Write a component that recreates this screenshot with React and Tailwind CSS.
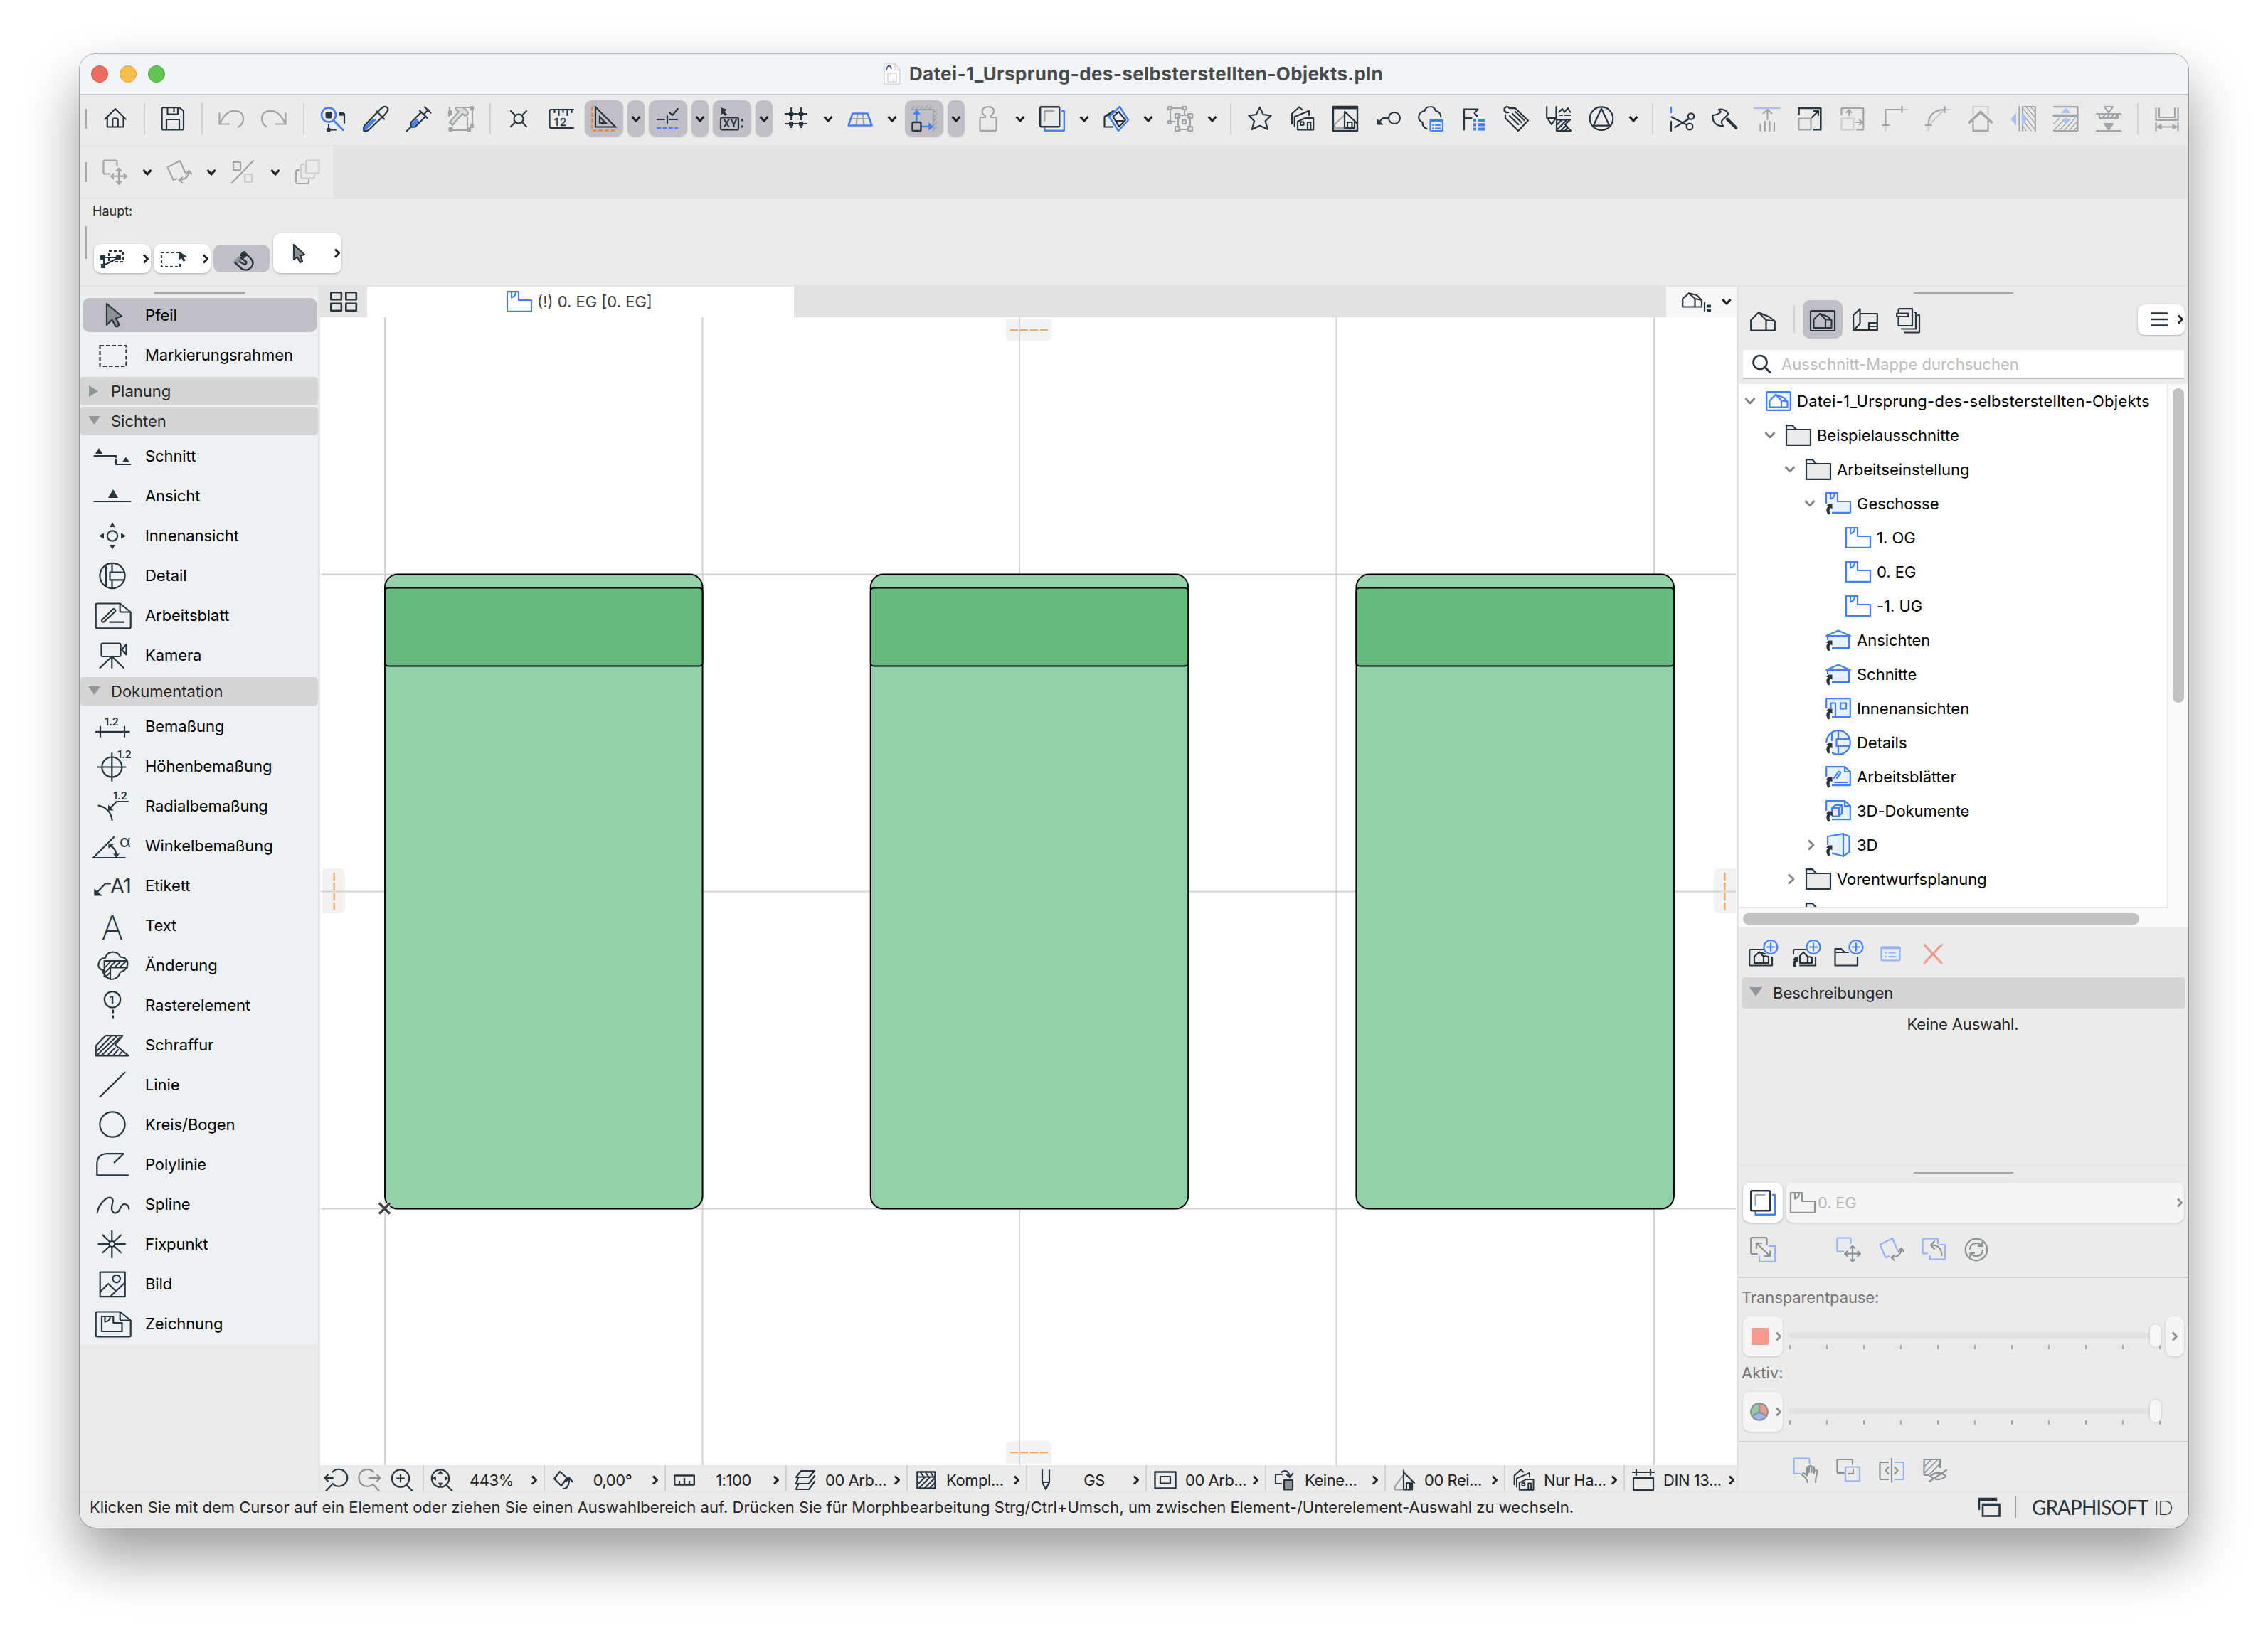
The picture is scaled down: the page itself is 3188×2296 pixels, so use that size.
import React from "react";

const D = "#28353d";
const B = "#437ff7";
const G = "#a1a5a8";
const L = "#cbcdce";
const LB = "#a9c0f5";
const MB = "#95b2f4";
const MG = "#8c9194";

function S({ w = 36, h = w, c = D, sw = 2.2, children, vb }) {
  return (
    <svg width={w} height={h} viewBox={vb || `0 0 ${w} ${h}`} fill="none" stroke={c} strokeWidth={sw} strokeLinecap="round" strokeLinejoin="round" className="block shrink-0 overflow-visible">
      {children}
    </svg>
  );
}
const P = (p) => <path {...p} />;

const ChevDown = ({ c = "#1f2021" }) => (
  <S w={14} h={10} c={c} sw={3.2}><P d="M1.5 2L7 8L12.5 2" strokeLinecap="butt" /></S>
);
const ChevRight = ({ c = "#1f2021" }) => (
  <S w={10} h={14} c={c} sw={3}><P d="M2 1.5L7.5 7L2 12.5" strokeLinecap="butt" /></S>
);

/* ---------- shared glyphs ---------- */
function House3D({ c = D, w = 36, h = 28, sw }) {
  return (
    <S w={w} h={h} vb="0 0 36 28" c={c} sw={sw}>
      <P d="M1.2 26.5V12L12 1.2L22.5 12V26.5H1.2ZM22.5 12L34.8 13.5V26.5H22.5M12 1.2L27 7.5L34.8 13.5" />
    </S>
  );
}
const ViewMap = ({ c = D }) => (
  <S w={36} c={c}>
    <rect x="1" y="4" width="34" height="28" rx="1" />
    <P d="M5.5 28V16L14 8L22 16V28H5.5ZM22 16L30.5 17V28H22M14 8L25 12L30.5 17" sw="2" />
  </S>
);
const Floor = ({ c = B, w = 36, h = 30, fill = "none" }) => (
  <S w={w} h={h} vb="0 0 36 30" c={c}>
    <P d="M1 1.2H17V13H35V28.8H1Z" fill={fill} />
    <P d="M7 1.5V9.5Q13 8 13 1.5" />
  </S>
);
const Folder = ({ c = D, fill = "#ebebeb" }) => (
  <S w={36} h={30} c={c}>
    <P d="M1 28.8V1.2H9.5L15 7H35V28.8Z" fill={fill} />
    <P d="M1 7H16" />
  </S>
);
const Trace = () => (
  <S w={36}>
    <P d="M7.5 31V34.8H34.8V7H32" stroke={B} strokeWidth="2.4" />
    <rect x="1.2" y="1.2" width="27" height="28" rx="1.5" strokeWidth="2.4" />
    <P d="M7.5 21V7H20.5" stroke={G} />
  </S>
);
const Houses = ({ w = 36 }) => (
  <S w={w} vb="0 0 36 36">
    <P d="M2.9 25V11L13.3 1.5L17 5M6.7 28.7V15.3L27 6.7V13M11 33.5V22L21.7 17H33.2V33.5ZM25 33V23H29.3V33" />
    <rect x="15" y="22.5" width="4.5" height="4.5" rx="1" />
  </S>
);
const MoveBox = ({ c1 = G, c2 = G, w = 36 }) => (
  <S w={w} vb="0 0 36 36" c={c2}>
    <P d="M10 20.5H3Q1.5 20.5 1.5 19V3Q1.5 1.5 3 1.5H19Q20.5 1.5 20.5 3V9" stroke={c1} />
    <P d="M23 13V34.5M12.5 23.7H34M19.8 16L23 12.7L26.2 16M19.8 31.5L23 34.8L26.2 31.5M15.5 20.5L12.2 23.7L15.5 27M30.5 20.5L33.8 23.7L30.5 27" />
  </S>
);
const RotateBox = ({ c1 = G, c2 = G, w = 36 }) => (
  <S w={w} vb="0 0 36 36" c={c2}>
    <P d="M14 27.5L9.5 29L1.5 11L19 2L26 18" stroke={c1} />
    <P d="M18 29Q31 28 31.5 17M27.5 20.5L31.5 16L35 20.5M22 25.5L17.5 29L22 33" />
  </S>
);

/* ---------- main toolbar ---------- */
const Perspective = () => (
  <S w={36} c={G}>
    <P d="M5 18H31M14.5 11L12.5 27M21.5 11L23.5 27" />
    <P d="M7.5 10.5H28.5L34.5 27.5H1.5Z" stroke={B} strokeWidth="2.6" />
  </S>
);
const HatchLines = ({ c = G }) => <P stroke={c} strokeWidth="1.6" d="M1 4L4 .5M7 4L10 .5M13 4L16 .5M19 4L22 .5M25 4L28 .5" />;

const T = {
  home: <S><P d="M3.5 18.5L18 4L32.5 18.5M6.8 16V29.5H29.5V16M14.3 29V20Q14.3 17.5 16 17.5H20Q21.8 17.5 21.8 20V29" /></S>,
  save: <S><P d="M4.5 2.2H27L33 7V31.5Q33 33.5 31 33.5H4.5Q2.6 33.5 2.6 31.5V4Q2.6 2.2 4.5 2.2ZM10.5 2.5V11.5H25V2.5M19.5 3V8M9 33V19H27V33" /></S>,
  undo: <S c={G}><P d="M1.5 10V25.5H15M2 25Q10 7 22 6.8Q34.8 7 35 18Q34.8 26 28 29.5" /></S>,
  redo: <S c={G}><P d="M34.5 10V25.5H21M34 25Q26 7 14 6.8Q1.2 7 1 18Q1.2 26 8 29.5" /></S>,
  find: <S><circle cx="12" cy="12.5" r="10" stroke={B} strokeWidth="2.6" /><P d="M19 20.5L32.5 34" stroke={B} strokeWidth="2.8" /><rect x="7.5" y="8" width="9.5" height="9.5" rx="2.5" fill={D} stroke="none" /><P d="M28 11H34V24M12 26V33.5H22" /><rect x="27" y="8.7" width="6" height="5" fill={D} stroke="none" /><rect x="9.5" y="31" width="5" height="5" fill={D} stroke="none" /></S>,
  dropper: <S><P d="M4 33.5L19 18.5L14 17L2.5 28.5Q0 33 3 34.5Z" fill={B} stroke="none" transform="translate(0 1)" /><P d="M24 5L2.5 27.5Q0 31.5 1.5 35Q5 36 8.5 33.5L31 12M19.5 7.5L30 18.5M24 5L28 1.8Q32 -.5 34.5 2.5Q36.5 5 34 8L31 12" /></S>,
  syringe: <S><P d="M9 24L15.5 17.5L19.5 22L13 28.5L7.5 29.5Z" fill={B} stroke="none" /><P d="M22 9L7.5 23.5V30L13.5 29.5L28.5 14.5M7 30L1.5 35.5M20 6.5L30.5 17M25.5 12L32 5M27 1.5L35.5 9.5" /></S>,
  transfer: <S c={G}><P d="M2 9V2M1 8V14M4 34H30M27 16V30M34 2V28M22 2H34" /><rect x="1.5" y="7" width="3" height="5" fill={G} /><rect x="1.5" y="31" width="4" height="4" fill={G} /><rect x="27" y="31" width="4" height="4" fill={G} /><rect x="32" y="1" width="3" height="4" fill={G} /><rect x="32" y="26" width="3" height="4" fill={G} /><P d="M11 2H20Q26 4 28 11L24 14L20 11L6 27L2 23L15 8L11 5Z" fill="#dcdddd" /></S>,
  snap: <S><circle cx="18" cy="18" r="6.5" /><P d="M7 7L13.5 13.5M29 7L22.5 13.5M7 29L13.5 22.5M29 29L22.5 22.5" /></S>,
  ruler: <S><P d="M35 5H4Q1.5 5 1.5 7V29Q1.5 31 4 31H35M8.5 5V9M14.5 5V13M20.5 5V9M26.5 5V13M32.5 5V9" /><text x="8" y="27.5" fontSize="15" fontFamily="Inter" letterSpacing="2" fill={D} stroke={D} strokeWidth=".4">12</text></S>,
  triangle: <S><P d="M1.5 1V34.5H36" stroke="#ec8434" strokeWidth="2.6" strokeDasharray="5.5 3" strokeLinecap="butt" /><P d="M6 1.5V29.5H34ZM12 15.5V24H20.5Z" strokeLinejoin="miter" /></S>,
  guide: <S><P d="M3 19H13M17 14V24M20 19H31M20 9L24 13L32 4" /><P d="M2 31H32" stroke={B} strokeWidth="2.6" strokeDasharray="6 2.5" strokeLinecap="butt" /></S>,
  xy: <S><P d="M2 2V13L5 10.5L8.5 14L11 12L7.5 8L11 5Z" fill={D} stroke="none" /><rect x="2" y="16.5" width="25" height="17" rx="2" /><text x="5" y="30" fontSize="14" fontWeight="700" fontFamily="Inter" fill={D} stroke="none">XY</text><P d="M31 20H34M31 29H34" strokeWidth="3" strokeLinecap="butt" /></S>,
  grid: <S><P d="M11 2V34M25 2V34" strokeDasharray="7 4" strokeLinecap="butt" /><P d="M2 11H34M2 25H34" strokeLinecap="butt" /><rect x="8" y="8" width="6" height="6" rx="1" fill={D} stroke="none" /><rect x="22" y="8" width="6" height="6" rx="1" fill={D} stroke="none" /><rect x="8" y="22" width="6" height="6" rx="1" fill={D} stroke="none" /><rect x="22" y="22" width="6" height="6" rx="1" fill={D} stroke="none" /></S>,
  perspective: <Perspective />,
  snapbox: <S><HatchLines /><P d="M0 5H31V36" stroke={G} /><P stroke={G} strokeWidth="1.6" d="M32 9L35.5 5M32 15L35.5 11M32 21L35.5 17M32 27L35.5 23M32 33L35.5 29" /><P d="M7.5 22V8M14 29H28" stroke={B} strokeWidth="2.4" /><P d="M3 11L7.5 5.5L12 11ZM25 24.5L31 29L25 33.5Z" fill={B} stroke={B} strokeWidth="1" /><rect x="1.5" y="23" width="12" height="12" rx="1.5" strokeWidth="2.4" /></S>,
  weight: <S c={G}><P d="M14 14Q9 11 9.5 7Q10.5 1.2 18 1.2Q25.5 1.2 26 7Q26 11 21.5 14V16H28Q29.5 16 29.5 18V33Q29.5 34.8 28 34.8H8Q6.5 34.8 6.5 33V18Q6.5 16 8 16H14Z" /></S>,
  trace: <Trace />,
  cube: <S><P d="M14 7L1.5 15V29.5H13M14 7L18 9M1.5 15L9 12" /><P d="M23 1L8 15L21 35L35 20Z" stroke={B} strokeWidth="2.4" /><P d="M21.5 8L13.5 15L22 29L31 20ZM17 21H28" /></S>,
  group: <S c={G}><P d="M4 5V20M5 3H22M24 5V12M4 22H10M15 15V30M16 13H30M32 15V30M16 33H30" /><rect x="1" y="1" width="5" height="4" /><rect x="21" y="1" width="5" height="4" /><rect x="1" y="21" width="4" height="4" /><rect x="11" y="11" width="6" height="6" /><rect x="29" y="11" width="6" height="6" /><rect x="11" y="29" width="6" height="6" /><rect x="29" y="29" width="6" height="6" /><rect x="21" y="20" width="5" height="5" /></S>,
  star: <S><P d="M17.8 2L22.7 12L33.5 13.6L25.6 21.2L29 33L17.8 27.7L6.8 33L10.1 21.2L2.5 13.6L12.8 12Z" /></S>,
  houses: <Houses />,
  frame: <S><P d="M17 12.7L3 26Q2 29 4.5 31H16" stroke={G} /><rect x="1" y="1" width="34" height="34" strokeWidth="2.4" /><P d="M1 2.5H35" strokeWidth="4" strokeLinecap="butt" /><P d="M17 8V31H31V21M18 8.5L34 24M21 31V23H27.5V31" /></S>,
  leader: <S><circle cx="27" cy="17" r="8" /><P d="M19 17H11L5 23" /><P d="M2.5 18.5V26H10.5Z" fill={D} strokeWidth="1" /></S>,
  cloud: <S><P d="M32.3 15.5Q32 8 25 7Q23.5 .8 17.5 1Q11 1 9.5 7Q1.5 8 1.2 16Q1.5 21 6.5 23Q6.5 30 12.5 32" /><rect x="17.5" y="19" width="17.5" height="16" rx="1" stroke={B} fill="#e6effc" strokeWidth="2.2" /><P d="M18 21H35" stroke={B} strokeWidth="4" strokeLinecap="butt" /><P d="M21 27H22M25 27H31M21 31.5H22M25 31.5H31" stroke={B} /></S>,
  flag: <S><P d="M5 33.5V4.5H24.5L19.5 10L23.5 14.5M5 17H15.5" /><P stroke={B} strokeWidth="4.2" strokeLinecap="butt" d="M18 20H22M24 20H34.5M18 26.3H22M24 26.3H34.5M18 32.5H22M24 32.5H34.5" /></S>,
  tag: <S><P d="M3 12.5V17L21 35L35 20.5L17 3.2H9M7.5 9Q3 10 1.5 6Q1 2 5 1.2Q7.5 1 8.5 3M9 14L21.5 26M13 11L26 23.5M17 8L30 20.5" /></S>,
  pens: <S><P d="M1.2 1V17H14.5V1M2 17L8 26L14 17M18.5 8.5L23 4L26 8.5L31 3L34 8.5M20 13H23M27 13H34M15 35V19.5H34L27 26L35 35ZM15 27L22 20M15 34L29 20M21 35L27 29M27 35L30 31" /></S>,
  north: <S><circle cx="18" cy="17.7" r="16.3" /><P d="M18 3.5L6.8 27.7H29.2Z" /></S>,
  scissors: <S><P d="M3 1V10" stroke={B} strokeLinecap="butt" /><P d="M3 22V35M3.5 15.5L25 26.5M8.5 30L27.5 18.5" /><circle cx="31" cy="14.5" r="4.2" /><circle cx="29" cy="29" r="4.4" /></S>,
  axe: <S><P d="M22 18.5L34.5 31" strokeWidth="4" /><P d="M10 5L13 8.5Q8 12.5 1.5 13Q1 21 5 24.5Q9 28.5 16 28.2Q13 24 14.5 20.5L23.5 11.5Q21.5 6.5 17 5.5Q13.5 4 10 5Z" /></S>,
  lift: <S c={G}><P d="M.5 3H35.5" stroke={LB} strokeWidth="2.6" /><P d="M18.5 19V6M12.5 10.5L18.5 5L24.5 10.5M8.5 26V35M15 22V35M21.5 22V35M28 24V35" /></S>,
  resize: <S><P d="M2.5 13V3H33.3V33.3H23" strokeWidth="2.6" strokeLinecap="butt" /><rect x="2.5" y="17.5" width="17" height="15.8" stroke={G} /><P d="M21 16L29.5 7.5M23.5 7H30V13" /></S>,
  stretch: <S c={G}><P d="M2.5 13V3H33.3V33.3H23" strokeLinecap="butt" /><rect x="2.5" y="17.5" width="17" height="15.8" stroke={L} /><P d="M13 13V6M9.5 9L13 5.5L16.5 9M23 23H31M28 19.5L31.5 23L28 26.5" /></S>,
  corner: <S c={G}><P d="M4.5 35V28M28 5H35" stroke={L} /><P d="M4.5 27V5H27M27.5 1V9M.5 27H9" /></S>,
  fillet: <S c={G}><P d="M4.5 35V28L27 5H35" stroke={L} /><P d="M4.5 27Q5 6 27 5M27.5 1V9M.5 27H9" /></S>,
  roof: <S c={G}><P d="M7.5 12V1H28.5V12" stroke={L} /><P d="M7.5 21V34.8H28.5V21" /><P d="M2.5 23L18 8.5L33.5 23" strokeWidth="3.6" /></S>,
  wall: <S c={G}><P d="M17 1H34.8V35M12.5 1V35M17 1V35" /><P d="M18 4L34 24M18 12L34 33M18 21L29 35M22 1L34 16M28 1L34 8M18 29L22 35" strokeWidth="1.3" /><P d="M8 9V28L.5 18.5ZM16 9V28L23.5 18.5Z" fill={LB} stroke="none" /></S>,
  slab: <S c={G}><P d="M1 1.2H34.5V35H1M1 13.5H34" /><P d="M1 13.5H34" strokeWidth="3.6" /><P d="M1 34L18 17M8 35L24 18M15 35L31 17M22 35L34 22M29 35L34 29M1 25L9 17" strokeWidth="1.3" /><P d="M11 10H25L18 2.5ZM11 18H25L18 26Z" fill={LB} stroke="none" /></S>,
  elevate: <S c={G}><P d="M12 1H24L18 9.5ZM1 11H35M5 11.5V17H31V11.5M9 17L13 12M15 17L19 12M21 17L25 12M27 17L30 12M1 35H35" /><P d="M12 25H24L18 34Z" fill={G} /></S>,
  dimension: <S c={G}><P d="M2.5 3V20H33.5V3M7 3V16H29V3M2.5 24V35M33.5 24V35M5 29.5H31" /><P d="M10 26V33L4 29.5ZM26 26V33L32 29.5Z" fill={G} strokeWidth="1" /></S>,
};

const Cell = ({ children }) => <div className="flex h-[52px] w-[60px] shrink-0 items-center justify-center">{children}</div>;
const ActiveCell = ({ children }) => (
  <div className="flex w-[60px] shrink-0 justify-center">
    <div className="flex h-[51px] w-[54px] items-center justify-center rounded-[10px] bg-[#c0bfc5] shadow-[0_1px_2px_rgba(0,0,0,0.12)]">{children}</div>
  </div>
);
const Chev = () => <div className="flex h-[52px] w-[30px] shrink-0 items-center justify-center"><ChevDown /></div>;
const ActiveChev = () => (
  <div className="flex w-[30px] shrink-0 justify-center">
    <div className="flex h-[51px] w-6 items-center justify-center rounded-[9px] bg-[#c0bfc5] shadow-[0_1px_2px_rgba(0,0,0,0.12)]"><ChevDown /></div>
  </div>
);
const SEP = { "|": "w-[21px]", "||": "w-[22px]", "|||": "w-[23px]" };
const Sep = ({ kind }) => (
  <div className={"flex h-11 shrink-0 justify-center " + SEP[kind]}>
    <div className="h-11 w-[2px] bg-[#d1d1d1]" />
  </div>
);
const Grip = ({ cls }) => <div className={"w-[2px] shrink-0 bg-[#a9a9a9] " + cls} />;

const TOOLBAR = [
  "home", "|", "save", "||", "undo", "redo", "|||", "find", "dropper", "syringe", "transfer", "|", "snap", "ruler",
  "*triangle", "*v", "*guide", "*v", "*xy", "*v", "grid", "v", "perspective", "v", "*snapbox", "*v", "weight", "v",
  "trace", "v", "cube", "v", "group", "v", "||", "star", "houses", "frame", "leader", "cloud", "flag", "tag", "pens",
  "north", "v", "|||", "scissors", "axe", "lift", "resize", "stretch", "corner", "fillet", "roof", "wall", "slab",
  "elevate", "||", "dimension",
];

function MainToolbar() {
  return (
    <div className="flex h-[70px] items-center overflow-hidden bg-[#ebebeb] pb-[5px] pl-2">
      <Grip cls="mr-[10px] h-7" />
      {TOOLBAR.map((k, i) => {
        if (k[0] === "|") return <Sep key={i} kind={k} />;
        if (k === "v") return <Chev key={i} />;
        if (k === "*v") return <ActiveChev key={i} />;
        if (k[0] === "*") return <ActiveCell key={i}>{T[k.slice(1)]}</ActiveCell>;
        return <Cell key={i}>{T[k]}</Cell>;
      })}
    </div>
  );
}

function EditToolbar() {
  return (
    <div className="flex h-[76px] bg-[#e4e4e4] py-[2px]">
      <div className="flex w-[356px] items-center bg-[#ebebeb] pl-2">
        <Grip cls="mr-[10px] h-7" />
        <Cell><MoveBox /></Cell>
        <Chev />
        <Cell><RotateBox /></Cell>
        <Chev />
        <Cell>
          <S c={G}><rect x="4" y="4" width="10" height="11" /><P d="M2 33L32 2" /><rect x="20" y="21" width="10" height="11" stroke={L} /></S>
        </Cell>
        <Chev />
        <Cell>
          <S c={L}><rect x="16" y="1.5" width="18.5" height="18" rx="2" /><P d="M13 7H10.5Q9 7 9 9V25Q9 26.5 11 26.5H26Q28 26.5 28 24V22" /><P d="M6 15H4Q2 15 2 17V32Q2 34 4 34H18Q20 34 20 32V29" stroke={G} /></S>
        </Cell>
      </div>
    </div>
  );
}

const WhiteBtn = "rounded-[10px] bg-white shadow-[0_1px_3px_rgba(0,0,0,0.28)]";

function InfoBox() {
  return (
    <div className="flex h-[121px] flex-col bg-[#ebebeb] pl-2">
      <div className="mt-[5px] h-[23px] pl-[10px] text-[18px] leading-[23px] text-[#262626]">Haupt:</div>
      <div className="flex h-[76px]">
        <Grip cls="mr-[10px] mt-[10px] h-[46px]" />
        <div className="flex items-end gap-1">
          <div className={"flex h-[41px] w-20 items-center justify-between pl-[9px] pr-[2px] " + WhiteBtn}>
            <S w={34} h={26}><rect x="12" y="2" width="20" height="15" strokeDasharray="4 3" strokeLinecap="butt" /><P d="M4 11H26L5 22V11" /><rect x="0" y="8" width="7" height="6" fill={D} stroke="none" /><rect x="22" y="8" width="7" height="6" fill={D} stroke="none" /><rect x="1" y="20" width="6" height="6" fill={D} stroke="none" /></S>
            <ChevRight />
          </div>
          <div className={"flex h-[41px] w-20 items-center justify-between pl-[9px] pr-[2px] " + WhiteBtn}>
            <S w={38} h={26}><P d="M26 4H2V24H28V18" strokeDasharray="4 3" strokeLinecap="butt" /><P d="M26 2V15L30 12L33 17L36 15L33 11L38 10Z" fill={D} stroke="none" /></S>
            <ChevRight />
          </div>
          <div className="mb-[1px] flex h-[39px] w-[79px] items-end justify-center rounded-[10px] bg-[#c0bfc5] pl-1">
            <S w={32} h={32}><P d="M2 17L10 9L15 14L9 20Z" fill={MG} stroke="none" /><P d="M11 8Q14 2 18 3L22 8L16 13Z" fill={D} stroke="none" /><P d="M17 3L27 13Q32 19 27 25Q21 31 14 27L4 18M12 11L20 17Q21 20 18 21L11 17" strokeWidth="2.4" /></S>
          </div>
          <div className={"ml-[1px] flex h-14 w-24 items-center justify-between pl-[26px] pr-[1px] " + WhiteBtn}>
            <S w={20} h={28}><P d="M3 2V23L7.5 19.5L12 27L15 25L12 17.5L18 16Z" fill={MG} /></S>
            <ChevRight />
          </div>
        </div>
      </div>
    </div>
  );
}

/* ---------- toolbox ---------- */
const t12 = (x, y) => <text x={x - 1} y={y} fontSize="14.5" fontWeight="600" fontFamily="Inter" fill={D} stroke="none">1.2</text>;
const DOC = "M6.5 3.5H38.7L53.7 15.5V36.5Q53.7 38.3 52 38.3H6.5Q4.7 38.3 4.7 36.5V5.5Q4.7 3.5 6.5 3.5ZM38.7 3.5V14Q38.7 15.5 41 15.5H53.5";
const K = {
  pfeil: <><P d="M20 4L41 21.5L32.5 24.5L37.5 33Q36 37 32.5 36L27.5 26.5L20 34Z" fill={MG} /></>,
  mark: <rect x="10.5" y="7" width="37" height="29" strokeDasharray="5.5 3" strokeLinecap="butt" />,
  schnitt: <><P d="M2.5 20H33V22M33 25V32H53.5" /><P d="M4 17L9 9L14 17ZM42 28.5L47 21.5L52 28.5Z" fill={D} stroke="none" /></>,
  ansicht: <><P d="M2.5 28H53.5" /><P d="M22 23L29 11L36 23Z" fill={D} stroke="none" /></>,
  innen: <><circle cx="28" cy="20.5" r="7.2" /><P d="M24 8L28 1.5L32 8ZM24 33L28 39.5L32 33ZM16 16.5V24.5L9 20.5ZM40 16.5V24.5L47 20.5Z" fill={D} stroke="none" /></>,
  detail: <><circle cx="28" cy="20.5" r="17.6" /><P d="M19 5.5V35.5M27.5 3V15.5M27.5 26.3V38M45 15.5H24.5V26.3H45" /></>,
  blatt: <><P d={DOC} /><P d="M13 27L28 12Q31 10 32 13Q33 14 31 15.5L16 29.5Q13 30 13 27ZM24.5 29.7H44" /></>,
  kamera: <><rect x="12.5" y="3.5" width="27" height="18.5" rx="2" /><P d="M47.5 5V19.5L41 12.3ZM27.3 22V38M27.3 22L10.5 38M27.3 22L43.7 38" /></>,
  bem: <><P d="M4.7 27.8H51.7M11 20.5V35M45 20.5V35" />{t12(18, 18.5)}</>,
  hoehe: <><circle cx="27.3" cy="21.5" r="14" /><P d="M7.5 21.5H46.5M27.3 2V41" />{t12(36, 9)}</>,
  radial: <><P d="M8.5 19.5Q26 24 27.5 40M24 24L34 14H50" /><P d="M22 26.5V18.5L29.5 26.5Z" fill={D} stroke="none" />{t12(30, 11)}</>,
  winkel: <><P d="M30 8L1 37H45.7M24 20Q33 23 33.5 33" /><P d="M22.5 24V17H31ZM29 31.5H38L33.5 37Z" fill={D} stroke="none" /><text x="38" y="21.5" fontSize="24" fontFamily="Inter" fill={D} stroke="none">α</text></>,
  etikett: <><P d="M5 31L18 17.5H25" /><P d="M2.3 24.5V34.5H14Z" fill={D} stroke="none" /><text x="25" y="31" fontSize="29" fontWeight="400" letterSpacing="-1" fontFamily="Inter" fill={D} stroke="none">A1</text></>,
  text: <text x="28" y="39.5" textAnchor="middle" fontSize="47" fontWeight="200" fontFamily="Inter" fill={D} stroke="none">A</text>,
  aend: <><P d="M17 33Q13 29 15 27Q7 25 8.5 18Q10 10 18 10Q20 2 28.5 1.5Q37 2 39 8.5Q49 9 49.5 18Q49 27 39 30Q36 39.5 27 40Q20 39 17 33ZM16.7 14H49M16.7 14V36M25 38V23.5H49" /><P d="M17 24L26 14.5M24 23L33 14.5M31 23L40 14.5M38 23L47 15M17 31L24 24M18 37L25 30" strokeWidth="1.8" /></>,
  raster: <><circle cx="28" cy="12.3" r="11.2" /><P d="M29 26.5V40" strokeDasharray="5 3" strokeLinecap="butt" /><text x="24" y="17.5" fontSize="14" fontWeight="700" fontFamily="Inter" fill={D} stroke="none">1</text></>,
  schraff: <><P d="M4.7 35.3V21.5L18.3 7.2H42.3L31.7 20L50.7 35.3Z" /><P d="M6 29L26 8M6 35L34 8M13 35L38 10M21 35L32 24M29 35L36 27M37 35L41 30" strokeWidth="1.9" /></>,
  linie: <P d="M10.5 37.3L45.5 2.8" />,
  kreis: <circle cx="28" cy="20" r="17.6" />,
  poly: <P d="M30.7 17.4L43.7 5.2H20Q7 6 6.3 18.5V35.3H50" />,
  spline: <P d="M6.7 32.2Q8 24 14 17Q21 9 26 11Q30 13 28 19Q25 31 31 32.3Q36 33 39 26Q42 19 46 20Q51 21 51.3 27" />,
  fix: <><circle cx="27.3" cy="20" r="4" /><P d="M8.5 20H23M31.5 20H46M27.3 1.6V16M27.3 24V39M14.5 7.5L24.3 17M30.3 23L40 32M40 7.5L30.3 17M24.3 23L14.5 32" /></>,
  bild: <><rect x="10.7" y="3.7" width="35" height="34.5" /><circle cx="33.7" cy="13" r="5.2" /><P d="M11 31L22.3 20L32.3 29.7M25 38L45.5 18.5" /></>,
  zeich: <><P d={DOC} /><P d="M13 10H29.3V19H41.5V31H13ZM17.5 10V17.5Q24.5 17 25 10" /></>,
};

const Tool = ({ icon, label, active }) => (
  <div className={active ? "mb-1 ml-1 mr-[1px] mt-[3px] flex h-12 items-center rounded-[10px] bg-[#c0bfc5] pl-[14px]" : "flex h-14 items-center pl-[18px]"}>
    <S w={56} h={40}>{K[icon]}</S>
    <span className="ml-[18px] text-[22px] leading-7 tracking-[-0.08px] text-black">{label}</span>
  </div>
);
const Group = ({ label, closed, cls = "" }) => (
  <div className={"flex h-10 items-center rounded-[5px] bg-[#d5d5d5] pl-3 " + cls}>
    <S w={18} h={18}>{closed ? <P d="M1 1V17L14 9Z" fill="#919699" stroke="none" /> : <P d="M0 2H17L8.5 14Z" fill="#919699" stroke="none" />}</S>
    <span className="ml-[14px] text-[22px] leading-7 text-[#262626]">{label}</span>
  </div>
);

function Toolbox() {
  const views = [["schnitt", "Schnitt"], ["ansicht", "Ansicht"], ["innen", "Innenansicht"], ["detail", "Detail"], ["blatt", "Arbeitsblatt"], ["kamera", "Kamera"]];
  const docs = [["bem", "Bemaßung"], ["hoehe", "Höhenbemaßung"], ["radial", "Radialbemaßung"], ["winkel", "Winkelbemaßung"], ["etikett", "Etikett"], ["text", "Text"], ["aend", "Änderung"], ["raster", "Rasterelement"], ["schraff", "Schraffur"], ["linie", "Linie"], ["kreis", "Kreis/Bogen"], ["poly", "Polylinie"], ["spline", "Spline"], ["fix", "Fixpunkt"], ["bild", "Bild"], ["zeich", "Zeichnung"]];
  return (
    <aside className="flex w-[338px] shrink-0 flex-col border-r-[3px] border-[#e4e4e4] bg-[#ebebeb]">
      <div className="flex h-[13px] justify-center pt-2"><div className="h-[2px] w-32 bg-[#a8a8a8]" /></div>
      <div className="bg-[#eef1f3] pb-[2px]">
        <Tool icon="pfeil" label="Pfeil" active />
        <Tool icon="mark" label="Markierungsrahmen" />
        <Group label="Planung" closed cls="mt-[3px]" />
        <Group label="Sichten" cls="mt-[2px]" />
        <div className="pt-[1px]">{views.map(([i, l]) => <Tool key={i} icon={i} label={l} />)}</div>
        <Group label="Dokumentation" cls="mt-[3px]" />
        <div className="pt-[1px]">{docs.map(([i, l]) => <Tool key={i} icon={i} label={l} />)}</div>
      </div>
    </aside>
  );
}

/* ---------- plan canvas ---------- */
function TabBar() {
  return (
    <div className="flex h-[43px] bg-[#e2e2e2]">
      <div className="flex w-[66px] items-center justify-center bg-[#e4e4e4]">
        <S w={38} h={28} sw={2.6}><rect x="1.3" y="1.3" width="14.5" height="10" /><rect x="22.3" y="1.3" width="14.5" height="10" /><rect x="1.3" y="16.8" width="14.5" height="10" /><rect x="22.3" y="16.8" width="14.5" height="10" /></S>
      </div>
      <div className="flex w-[600px] items-center justify-center gap-[7px] bg-white pr-[3px]">
        <Floor />
        <span className="text-[22px] leading-7 text-[#3c3c3c]">(!) 0. EG [0. EG]</span>
      </div>
      <div className="ml-auto flex w-[99px] items-center bg-[#f7f7f7] pl-[22px]">
        <S w={42} h={28}><P d="M1.2 21.5V10L10 2.2L18.5 10V21.5ZM18.5 10L28 12V21.5H18.5M10 2.2L21 5L28 12M32 15V27" /><P d="M35 20.5H41M35 27H41" strokeWidth="4" strokeLinecap="butt" /></S>
        <span className="ml-[14px]"><ChevDown /></span>
      </div>
    </div>
  );
}

function Canvas() {
  const bed = (x) => (
    <g key={x}>
      <rect x={x} y="362" width="447" height="893" rx="18" fill="#94d1ab" stroke="#000" strokeWidth="2" />
      <rect x={x} y="381" width="447" height="110" rx="5" fill="#67ba80" stroke="#000" strokeWidth="2" />
    </g>
  );
  return (
    <svg width="1991" height="1616" viewBox="0 0 1991 1616" className="block bg-white">
      <g fill="#f2f2f2">
        <path d="M964 2H1028V26Q1028 34 1020 34H972Q964 34 964 26Z" />
        <path d="M964 1614V1590Q964 1582 972 1582H1020Q1028 1582 1028 1590V1614Z" />
        <path d="M2 776H26Q34 776 34 784V831Q34 839 26 839H2Z" />
        <path d="M1991 776H1968Q1960 776 1960 784V831Q1960 839 1968 839H1991Z" />
      </g>
      <g stroke="#d3d3d3" strokeWidth="2">
        {[90, 537, 983, 1429, 1876].map((x) => <line key={x} x1={x} x2={x} y1="0" y2="1616" />)}
        {[362, 808.5, 1255].map((y) => <line key={y} y1={y} y2={y} x1="0" x2="1991" />)}
      </g>
      <g stroke="#f3a75f" strokeWidth="2.4" strokeDasharray="11 3">
        <path d="M970 18H1023M970 1598H1023M18.5 782V835M1975.5 782V835" />
      </g>
      {[90, 773.5, 1457].map(bed)}
      <g strokeLinecap="butt">
        <path d="M82 1247L97 1262M97 1247L82 1262" stroke="#fff" strokeWidth="7" opacity=".7" />
        <path d="M82 1247L97 1262M97 1247L82 1262" stroke="#444" strokeWidth="3.6" />
      </g>
    </svg>
  );
}

const Lens = ({ c = D, children, flip }) => (
  <S w={34} h={32} c={c}>
    <circle cx={flip ? 20 : 14} cy="13.5" r="12.2" />
    <P d={flip ? "M11.5 23L3 31.5" : "M22.5 23L31 31.5"} />
    {children}
  </S>
);
const QIcons = {
  rot: <S w={30} h={30}><P d="M10 3L20 12L12 23L2 13ZM15 27Q23 27 23 13M18.5 17L23 11.5L27.5 17" /></S>,
  scale: <S w={30} h={16} sw={2.4}><P d="M1.2 1.5H28.8V14.5H1.2ZM8 14V10M15 14V6M22 14V10" /></S>,
  layers: <S w={30} h={30}><P d="M9 2H28L20 11H2ZM5 12L2 20H20L28 9M5 21L2 28H20L28 17" /></S>,
  hatch: <S w={28} h={26}><rect x="1.5" y="1.5" width="25" height="23" strokeWidth="2.6" /><P d="M2 8.5H26M6 2L10 8M13 2L17 8M20 2L24 8M3 18L12 9M4 24L19 9M12 24L26 10M19 24L26 17" strokeWidth="2" /></S>,
  pen: <S w={20} h={30}><P d="M5 1V18H15V1M5 18L10 28L15 18" /></S>,
  box: <S w={32} h={26}><rect x="1.5" y="1.5" width="29" height="23" strokeWidth="2.4" /><rect x="9" y="8" width="14" height="9.5" /></S>,
  swap: <S w={30} h={30}><P d="M10 20H2V7H11M10 4Q19 -2 22 10M17 7L22 11L26 6" /><rect x="14" y="15" width="12" height="13.5" fill={MG} /></S>,
  reno: <S w={32} h={30}><P d="M15 8L4 22Q2 26 3 28.5H14" stroke={G} /><P d="M15 1.5V28.5H27V19M15 4L30 19M19 28V19H24V28" /></S>,
  houses: <Houses w={32} />,
  dim: <S w={32} h={30}><P d="M1 4H31M6 0V8M26 0V8" strokeWidth="2.2" /><rect x="2" y="12" width="28" height="17" strokeWidth="2.2" /></S>,
};
const QW = { a: "w-[170px]", b: "w-[168px]", c: "w-[159px]" };
const Quick = ({ icon, label, size = "b", mid }) => (
  <div className={"flex h-9 shrink-0 items-center border-l-2 border-[#d1d1d1] pt-[5px] " + QW[size]}>
    <div className="flex w-[52px] shrink-0 justify-center">{icon}</div>
    <span className={"min-w-0 flex-1 whitespace-nowrap text-[22px] leading-7 tracking-[-0.45px] text-[#222] " + (mid ? "pr-1 text-center" : "pl-[2px]")}>{label}</span>
    <div className={size === "c" ? "flex w-[12px] shrink-0" : "flex w-[26px] shrink-0 justify-center"}><ChevRight /></div>
  </div>
);

function QuickOptions() {
  return (
    <div className="flex h-9 items-center overflow-hidden bg-[#ebebeb] pl-[5px]">
      <div className="flex w-[139px] shrink-0 items-center gap-[13px] pt-[5px]">
        <S w={34} h={32}><P d="M12.5 4.5A12 12 0 1 1 12.5 21M1.5 13H13M6 8.5L1.5 13L6 17.5M11 23L3 31.5" /></S>
        <S w={34} h={32} c={MG}><P d="M23 4.5A12 12 0 1 0 22 22M17 13H32M28 8.5L32.5 13L28 17.5M23 22.5L31 31.5" /></S>
        <Lens><P d="M14 8.5V18.5M9 13.5H19" /></Lens>
      </div>
      <Quick size="a" mid icon={<Lens><P d="M11.5 6.5L14 3L16.5 6.5ZM11.5 20.5L14 24L16.5 20.5ZM7 11L3.5 13.5L7 16ZM21 11L24.5 13.5L21 16Z" fill={D} strokeWidth="1" /></Lens>} label="443%" />
      <Quick size="a" mid icon={QIcons.rot} label="0,00°" />
      <Quick size="a" mid icon={QIcons.scale} label="1:100" />
      <Quick size="a" icon={QIcons.layers} label="00 Arb..." />
      <Quick icon={QIcons.hatch} label="Kompl..." />
      <Quick mid icon={QIcons.pen} label="GS" />
      <Quick icon={QIcons.box} label="00 Arb..." />
      <Quick icon={QIcons.swap} label="Keine..." />
      <Quick icon={QIcons.reno} label="00 Rei..." />
      <Quick icon={QIcons.houses} label="Nur Ha..." />
      <Quick size="c" icon={QIcons.dim} label="DIN 13..." />
    </div>
  );
}

/* ---------- navigator ---------- */
const PF = "#e8f2fe";
const Link = ({ children }) => (
  <S w={36} h={34} c={B}>
    {children}
    <P d="M-1 17H9V34H-1Z" fill="#fff" stroke="none" />
    <P d="M1 21L4 17.5L9.5 17.5V24.5L7 23Q4.5 26 6.5 31.5L3.5 32.5Q-1 26 3.5 21Z" fill={D} stroke="none" />
  </S>
);
const N = {
  root: <S w={36} h={28} c={B}><rect x="1.2" y="1.2" width="33.6" height="25.6" rx="1.5" fill="#eef4fe" /><P d="M5.5 22.5V13.5L14 5L22 13.5V22.5ZM22 13.5L30.5 14.5V22.5H22M14 5L25 9L30.5 14.5" fill="#fff" /></S>,
  folder: <Folder />,
  stories: <Link><P d="M1 2.2H17V14H35V29.8H1Z" fill={PF} /><P d="M7 2.5V10.5Q13 9 13 2.5" /></Link>,
  story: <Floor />,
  elev: <Link><P d="M3 11H33V28H3Z" fill={PF} /><P d="M1.2 11L18 3.5L34.8 11Z" fill={PF} /></Link>,
  inner: <Link><rect x="1.2" y="3.2" width="33.6" height="26" fill={PF} rx="1" /><P d="M7.5 29V9.5H14V29" /><rect x="21" y="9.5" width="8" height="8" /></Link>,
  detail: <Link><circle cx="18" cy="17" r="16.8" fill={PF} /><P d="M9 3V14M18 .5V12M18 22V33.5M34 12H15.5V22H34" /></Link>,
  sheet: <Link><P d="M1.2 3.2H27L34.8 10V29.2H1.2Z" fill={PF} /><P d="M27 3.5V10H34.5M12 19L18 10Q21 9 21 12L16 19M13 25H30" /></Link>,
  doc3d: <Link><P d="M1.2 3.2H27L34.8 10V29.2H1.2Z" fill={PF} /><P d="M27 3.5V10H34.5M9 13L14 9H23V20L19 24.5H9ZM9 13H19V24M19 13L23 9" /></Link>,
  three: <Link><P d="M3 5L25 1.2L33.5 5V27L25 32.8L3 27Z" fill={PF} /><P d="M25 1.2V32.8" /></Link>,
};
const TREE = [
  [0, "d", "root", "Datei-1_Ursprung-des-selbsterstellten-Objekts"],
  [1, "d", "folder", "Beispielausschnitte"],
  [2, "d", "folder", "Arbeitseinstellung"],
  [3, "d", "stories", "Geschosse"],
  [4, "", "story", "1. OG"],
  [4, "", "story", "0. EG"],
  [4, "", "story", "-1. UG"],
  [3, "", "elev", "Ansichten"],
  [3, "", "elev", "Schnitte"],
  [3, "", "inner", "Innenansichten"],
  [3, "", "detail", "Details"],
  [3, "", "sheet", "Arbeitsblätter"],
  [3, "", "doc3d", "3D-Dokumente"],
  [3, "r", "three", "3D"],
  [2, "r", "folder", "Vorentwurfsplanung"],
  [2, "r", "folder", "Entwurfsplanung"],
];
const INDENT = ["pl-2", "pl-9", "pl-16", "pl-[92px]", "pl-[120px]"];

const Plus = () => (
  <><circle cx="31" cy="10.5" r="9.5" stroke={B} /><P d="M31 5.5V15.5M26 10.5H36" stroke={B} /></>
);

const NavBar = () => (
  <div className="flex h-[60px] items-center pl-4 pr-[5px]">
    <div className="pt-[6px]"><House3D /></div>
    <div className="ml-[25px] mr-[11px] h-10 w-[2px] bg-[#d1d1d1]" />
    <div className="flex h-[54px] w-[56px] items-center justify-center rounded-[10px] bg-[#c0bfc5] pt-1"><ViewMap /></div>
    <div className="ml-[14px]"><S w={36} h={32}><P d="M1.2 31V10L10.5 1.2V22L2 31H34.8V8H12M23 31V21H34M23 26H34" /></S></div>
    <div className="ml-[25px] pt-1"><S w={34} h={36}><P d="M8 1.2H23V25H3.5V10M3.5 6V3Q3.5 1.2 5.5 1.2H8" /><rect x="1.2" y="7.5" width="16" height="4.5" fill="#ebebeb" /><P d="M26 6H28V29.5H8M31 10H33V34.5H12" /></S></div>
    <div className={"ml-auto flex h-[43px] w-[66px] items-center justify-between pl-[18px] pr-[1px] " + WhiteBtn}>
      <S w={25} h={20}><P d="M1 1.5H24M1 10H24M1 18.5H24" strokeWidth="2.4" strokeLinecap="butt" /></S>
      <ChevRight />
    </div>
  </div>
);

function Navigator() {
  return (
    <div className="flex flex-col">
      <div className="flex h-4 justify-center pt-2"><div className="h-[2px] w-[140px] bg-[#a8a8a8]" /></div>
      <NavBar />
      <div className="mx-[6px] mt-[13px] flex h-[41px] items-center border-b-2 border-[#bdbdbd] bg-white pl-3">
        <S w={28} h={28}><circle cx="12" cy="11.5" r="9.5" strokeWidth="2.6" /><P d="M19 18.5L26 25.5" strokeWidth="3" /></S>
        <span className="ml-[14px] text-[22px] leading-7 tracking-[0.03px] text-[#bdbdbd]">Ausschnitt-Mappe durchsuchen</span>
      </div>
      <div className="mt-[7px] flex h-[737px]">
        <div className="w-[604px] overflow-hidden border-b-2 border-r-2 border-[#e4e4e4] bg-white">
          {TREE.map(([lvl, ch, ic, label], i) => (
            <div key={i} className={"flex h-12 items-center " + INDENT[lvl]}>
              <div className="flex w-4 shrink-0 justify-center">
                {ch === "d" && <S w={16} h={12} c="#7f8182" sw={2.8}><P d="M1.5 2L8 9L14.5 2" strokeLinecap="butt" /></S>}
                {ch === "r" && <S w={8} h={16} c="#7f8182" sw={2.8}><P d="M2 1.5L9 8L2 14.5" strokeLinecap="butt" /></S>}
              </div>
              <div className="ml-[14px] w-9 shrink-0">{N[ic]}</div>
              <span className={"ml-2 whitespace-nowrap text-[22px] leading-7 text-black " + (lvl === 0 ? "tracking-[0.25px]" : "tracking-[-0.02px]")}>{label}</span>
            </div>
          ))}
        </div>
        <div className="flex-1 bg-[#fafafa] pl-[6px] pt-[6px]"><div className="h-[442px] w-4 rounded-full bg-[#c2c2c2]" /></div>
      </div>
      <div className="h-[27px] bg-[#fafafa] pl-[6px] pt-[7px]"><div className="h-4 w-[557px] rounded-full bg-[#c2c2c2]" /></div>
      <div className="flex h-[70px] items-center gap-[19px] pl-[14px] pt-[3px]">
        <S w={41} h={40}><P d="M21 14H3Q1.2 14 1.2 16V36.5H33V25M8 33V24L15 17.5L21 24V33ZM21 23L28 24V33H21M16 18L23 20" /><Plus /></S>
        <S w={41} h={40}><P d="M20 14H5Q3 14 3 16V20M12 36.5H34V25M12 33V23L17 18L23 24V33ZM23 24L29 25V33H23" /><P d="M2 29L5 25H10V32L8 31Q5 34 7 38L4 39Q0 34 4 29Z" fill={D} stroke="none" /><Plus /></S>
        <S w={41} h={40}><P d="M20 18H1.5M1.5 36.5V13H10L15 18M1.5 36.5H33V25" /><Plus /></S>
        <div className="flex w-[38px] justify-center"><S w={29} h={22} c={MB}><rect x="1.5" y="1.5" width="26" height="19" rx="2" fill="#e3eafa" /><P d="M2 2.5H27" strokeWidth="3.4" /><P d="M7 9.5H8M12.5 9.5H21M7 15H8M12.5 15H21" /></S></div>
        <div className="ml-[3px] flex w-[38px] justify-center"><S w={28} h={28} c="#ec9c89" sw={3.2}><P d="M2 1.5L26 27M26 1.5L2 27" /></S></div>
      </div>
      <div className="mx-1 flex h-11 items-center rounded-[5px] bg-[#d5d5d5] pl-[11px]">
        <S w={18} h={18}><P d="M0 1H18L9 14Z" fill="#919699" stroke="none" /></S>
        <span className="ml-[15px] text-[22px] leading-7 text-[#262626]">Beschreibungen</span>
      </div>
      <div className="h-[220px] pr-[2px] pt-2 text-center text-[22px] leading-7 tracking-[-0.15px] text-[#262626]">Keine Auswahl.</div>
    </div>
  );
}

const SoftBtn = "flex shrink-0 items-center rounded-[10px] bg-[#f5f5f5] shadow-[0_1px_3px_rgba(0,0,0,0.16)]";
const Slider = () => (
  <div className="ml-2 flex h-14 w-[524px] flex-col pt-[11px]">
    <div className="flex h-8 items-center justify-end rounded-full">
      <div className="-mr-4 h-2 flex-1 rounded-full bg-[#e1e1e1]" />
      <div className="z-10 h-8 w-4 rounded-full bg-[#f6f6f6] shadow-[0_0_3px_rgba(0,0,0,0.2)]" />
    </div>
    <div className="-mt-[3px] flex justify-between pl-[1px] pr-[1px]">
      {Array.from({ length: 11 }, (_, i) => <div key={i} className="h-[6px] w-[2px] bg-[#a9a9a9]" />)}
    </div>
  </div>
);

function TracePalette() {
  return (
    <div className="flex flex-1 flex-col border-t-2 border-[#e3e3e3]">
      <div className="flex h-[23px] justify-center pt-2"><div className="h-[2px] w-[140px] bg-[#a8a8a8]" /></div>
      <div className="flex gap-1 px-[6px]">
        <div className={"flex h-14 w-14 items-center justify-center " + WhiteBtn}><Trace /></div>
        <div className={SoftBtn + " h-14 flex-1 pl-[6px] pr-[1px]"}>
          <Floor c={MG} />
          <span className="ml-[3px] text-[22px] leading-7 tracking-[-0.2px] text-[#b7b7b7]">0. EG</span>
          <span className="ml-auto"><ChevRight c="#8d8f90" /></span>
        </div>
      </div>
      <div className="flex h-[76px] items-center pl-4">
        <S c={MG}><P d="M10 24H3Q1.2 24 1.2 22V3Q1.2 1.2 3 1.2H22Q23.5 1.2 23.5 3V11M9 9L28 27M9 16V9H16M21 27H28V20" /><P d="M27 13H35V34.8H13V27" stroke={MB} /></S>
        <div className="ml-[85px] flex gap-6">
          <MoveBox c1={MB} c2={MG} />
          <RotateBox c1={MB} c2={MG} />
          <S c={MG}><P d="M8 23.5H3Q1.5 23.5 1.5 22V4Q1.5 2.5 3 2.5H23V9M26 11H33V31.5H12V27" stroke={MB} /><P d="M13 11.5Q28 11 28.5 26M18 6.5L13 11.5L18 17" /></S>
          <S c={MG}><circle cx="17" cy="18" r="15.3" /><P d="M8 17Q9 9 17 9Q22 9 25 13M26 19Q25 27 17 27Q12 27 9 23M20 13H25.5V7.5M14 23H8.5V28.5" /></S>
        </div>
      </div>
      <div className="border-t-2 border-[#d1d1d1] pl-1 pt-[13px] text-[22px] leading-7 tracking-[-0.1px] text-[#757575]">Transparentpause:</div>
      <div className="mt-[13px] flex px-[6px]">
        <div className={SoftBtn + " h-14 w-14 pl-3"}><div className="h-6 w-6 bg-[#f29b8e]" /><span className="ml-[9px]"><ChevRight c="#8d8f90" /></span></div>
        <Slider />
        <div className={SoftBtn + " ml-auto h-14 w-[26px] justify-center"}><ChevRight c="#8d8f90" /></div>
      </div>
      <div className="mt-[9px] pl-1 text-[22px] leading-7 text-[#757575]">Aktiv:</div>
      <div className="mt-[13px] flex px-[6px]">
        <div className={SoftBtn + " h-14 w-14 pl-[10px]"}>
          <S w={26} h={26} c={MG}>
            <P d="M13 13V1.2A11.8 11.8 0 0 1 23.2 18.9Z" fill="#f09a88" /><P d="M13 13L23.2 18.9A11.8 11.8 0 0 1 2.8 18.9Z" fill="#97b8f5" /><P d="M13 13L2.8 18.9A11.8 11.8 0 0 1 13 1.2Z" fill="#95cba3" />
          </S>
          <span className="ml-[9px]"><ChevRight c="#8d8f90" /></span>
        </div>
        <Slider />
      </div>
      <div className="mt-[13px] flex h-[73px] items-center gap-6 border-t-2 border-[#d1d1d1] pl-[76px] pt-[6px]">
        <S c={MG}><P d="M10 23H3Q1.5 23 1.5 21V3Q1.5 1.5 3 1.5H22Q23.5 1.5 23.5 3V8" stroke={MB} /><P d="M21 35Q20 30 13.5 25Q13 22 16 22.5L20 25.5V14Q21.5 12 23 14V21M23 13Q24.5 10 26.5 13V21M26.5 14Q28 11.5 30 14V22M30 19L32.5 18Q35.5 18 34.5 21Q32 29 32 35" /></S>
        <S c={MG}><P d="M12 22H4Q2.5 22 2.5 20V4.5Q2.5 3 4 3H22Q24 3 24 5V10M25 17V23H18" /><rect x="14" y="13.5" width="20" height="20" rx="1" stroke={MB} /></S>
        <S c={MG}><P d="M14 7H4Q2.5 7 2.5 9V29Q2.5 31 4 31H14M19 2V35M14.5 14L10.5 18.5L14.5 23M23.5 14L27.5 18.5L23.5 23" /><P d="M24 7H34Q35.8 7 35.8 9V29Q35.8 31 34 31H24" stroke={MB} /></S>
        <S c={MG}><P d="M11 25H6Q4.5 25 4.5 23V5Q4.5 3 6 3H27V14M12 34L36 18M13 26.5Q24 17 35.5 26.5Q24 35.5 13 26.5Z" /><P d="M5 13L15 3M5 22L24 3M12 24L27 9" strokeWidth="1.6" /></S>
      </div>
    </div>
  );
}

export default function App() {
  return (
    <div className="flex h-[2296px] w-[3188px] bg-white pl-28 pt-[76px] font-['Inter',sans-serif]">
      <div className="flex h-[2072px] w-[2964px] flex-col overflow-hidden rounded-[22px] bg-[#ebebeb] shadow-[0_0_0_1px_rgba(0,0,0,0.28),0_40px_80px_rgba(0,0,0,0.4)]">
        <header className="flex h-[58px] shrink-0 items-center border-b-2 border-[#c5c6c7] bg-[#f1f5f8] px-4 pb-[1px]">
          <div className="flex w-[200px] gap-4">
            <div className="h-6 w-6 rounded-full border border-[#d9574c] bg-[#ed6b60]" />
            <div className="h-6 w-6 rounded-full border border-[#dba43f] bg-[#f5bf4f]" />
            <div className="h-6 w-6 rounded-full border border-[#52a93f] bg-[#61c554]" />
          </div>
          <div className="flex flex-1 items-center justify-center gap-3 pr-[2px]">
            <S w={24} h={30} c="#c9c9c9" sw={1.2}><P d="M1 1H16L23 9V29H1Z" fill="#fff" /><P d="M16 1V9H23M6 14H18V26H6ZM10 14V17M14 22V26" /><P d="M4 9Q7 -1 11 7" stroke="#3b4fa5" strokeWidth="1.8" /></S>
            <span className="text-[26px] font-bold leading-8 tracking-[0.37px] text-[#494a4c]">Datei-1_Ursprung-des-selbsterstellten-Objekts.pln</span>
          </div>
          <div className="w-[200px]" />
        </header>
        <MainToolbar />
        <EditToolbar />
        <InfoBox />
        <div className="flex h-[1697px] shrink-0 border-y-2 border-[#e4e4e4]">
          <Toolbox />
          <main className="flex w-[1991px] shrink-0 flex-col">
            <TabBar />
            <Canvas />
            <QuickOptions />
          </main>
          <aside className="flex flex-1 flex-col border-l-[3px] border-[#e4e4e4]">
            <Navigator />
            <TracePalette />
          </aside>
        </div>
        <footer className="flex flex-1 items-center pl-[14px] pr-[23px] pb-2">
          <span className="text-[22px] leading-7 tracking-[0.022px] text-[#262626]">Klicken Sie mit dem Cursor auf ein Element oder ziehen Sie einen Auswahlbereich auf. Drücken Sie für Morphbearbeitung Strg/Ctrl+Umsch, um zwischen Element-/Unterelement-Auswahl zu wechseln.</span>
          <div className="ml-auto flex items-center">
            <S w={32} h={28} sw={2.6}><P d="M2 17V2H26V5" strokeLinejoin="miter" /><P d="M2 3H26" strokeWidth="4" strokeLinecap="butt" /><rect x="7" y="10" width="23.5" height="16.5" strokeLinejoin="miter" /><P d="M6 11H31" strokeWidth="4" strokeLinecap="butt" /></S>
            <div className="ml-5 mr-[22px] h-[30px] w-[2px] bg-[#9a9a9a]" />
            <span className="font-['Lato'] text-[28px] leading-8 tracking-[-0.95px] text-[#28353d]">GRAPHISOFT</span>
            <span className="ml-2 font-['Lato'] text-[28px] font-light leading-8 tracking-[-1.5px] text-[#28353d]">ID</span>
          </div>
        </footer>
      </div>
    </div>
  );
}
